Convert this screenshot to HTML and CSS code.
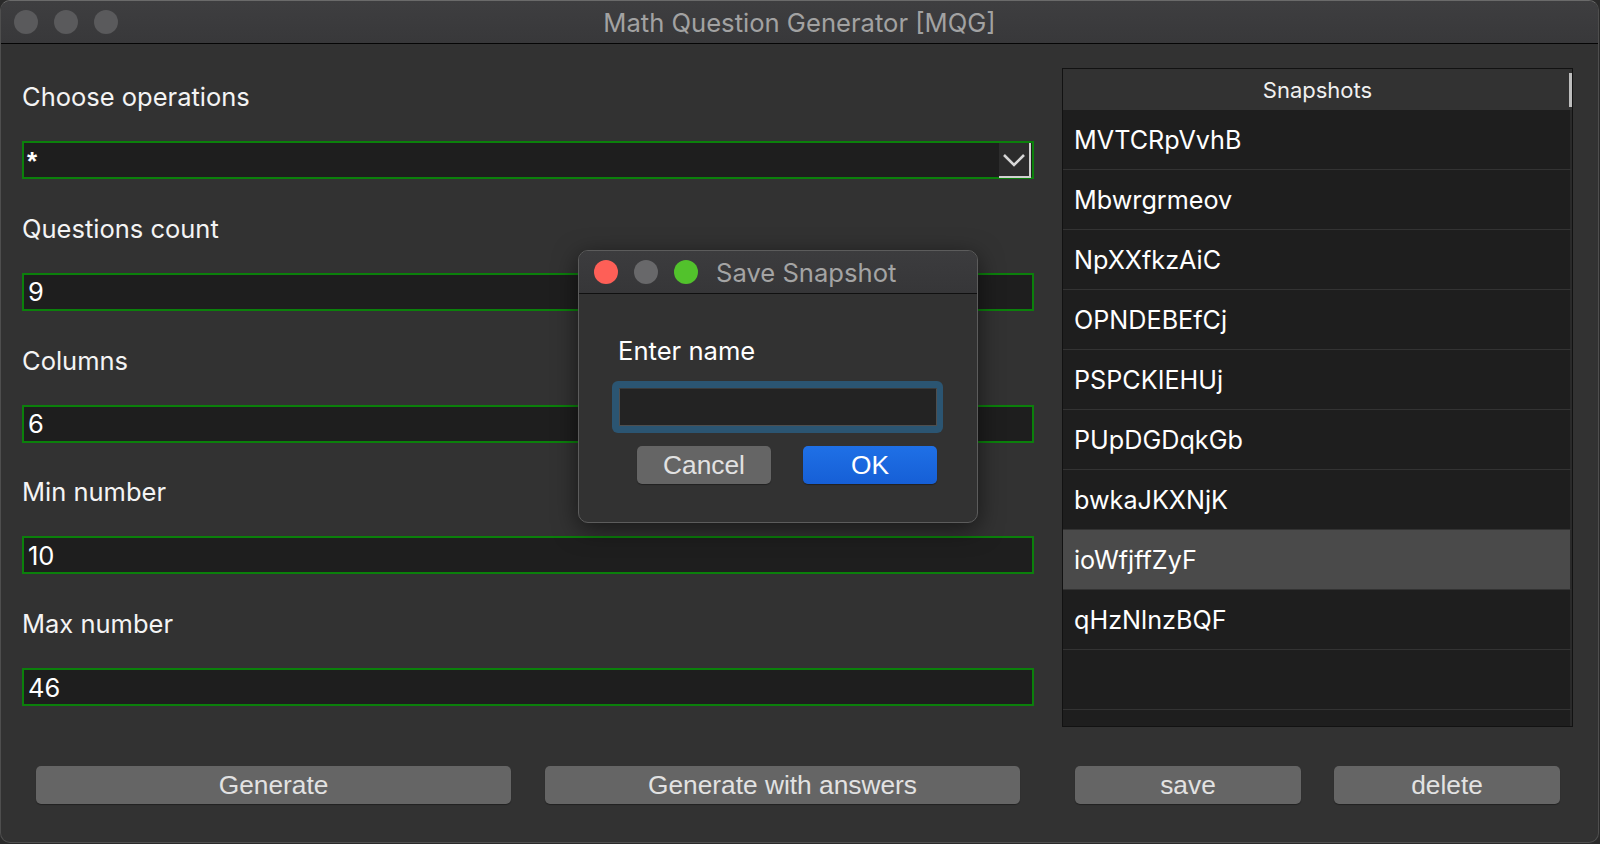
FILE: index.html
```html
<!DOCTYPE html>
<html>
<head>
<meta charset="utf-8">
<title>Math Question Generator [MQG]</title>
<link rel="stylesheet" href="styles.css">
</head>
<body>
<div class="window">
  <div class="titlebar">
    <div class="lights">
      <span class="light dim"></span>
      <span class="light dim"></span>
      <span class="light dim"></span>
    </div>
    <div class="title">Math Question Generator [MQG]</div>
  </div>
  <div class="content">
    <div class="form">
      <div class="field">
        <div class="label">Choose operations</div>
        <div class="input combo">
          <span class="value star">*</span>
          <span class="combo-btn">
            <svg width="26" height="16" viewBox="0 0 26 16"><polyline points="3,3 13,13 23,3" fill="none" stroke="#d6d6d6" stroke-width="2.6"/></svg>
          </span>
        </div>
      </div>
      <div class="field">
        <div class="label">Questions count</div>
        <div class="input"><span class="value">9</span></div>
      </div>
      <div class="field">
        <div class="label">Columns</div>
        <div class="input"><span class="value">6</span></div>
      </div>
      <div class="field">
        <div class="label">Min number</div>
        <div class="input"><span class="value">10</span></div>
      </div>
      <div class="field">
        <div class="label">Max number</div>
        <div class="input"><span class="value">46</span></div>
      </div>
    </div>
    <div class="list">
      <div class="list-head">Snapshots<span class="head-bar"></span></div>
      <div class="row">MVTCRpVvhB</div>
      <div class="row">Mbwrgrmeov</div>
      <div class="row">NpXXfkzAiC</div>
      <div class="row">OPNDEBEfCj</div>
      <div class="row">PSPCKIEHUj</div>
      <div class="row">PUpDGDqkGb</div>
      <div class="row">bwkaJKXNjK</div>
      <div class="row selected">ioWfjffZyF</div>
      <div class="row">qHzNlnzBQF</div>
      <div class="row"></div>
      <div class="row"></div>
    </div>
    <div class="btns left-btns">
      <button class="btn">Generate</button>
      <button class="btn">Generate with answers</button>
    </div>
    <div class="btns right-btns">
      <button class="btn">save</button>
      <button class="btn">delete</button>
    </div>
  </div>

  <div class="dialog">
    <div class="titlebar dlg-titlebar">
      <div class="lights">
        <span class="light red"></span>
        <span class="light gray"></span>
        <span class="light green"></span>
      </div>
      <div class="dlg-title">Save Snapshot</div>
    </div>
    <div class="dlg-body">
      <div class="dlg-label">Enter name</div>
      <div class="ring"><div class="field-inner"></div></div>
      <div class="dlg-btns">
        <button class="btn dlg-btn">Cancel</button>
        <button class="btn dlg-btn ok">OK</button>
      </div>
    </div>
  </div>
</div>
</body>
</html>
```

FILE: styles.css
```css
* { box-sizing: border-box; }
html, body { margin: 0; padding: 0; }
body {
  width: 1600px;
  height: 844px;
  background: #2a2a2a;
  font-family: "Inter", "Liberation Sans", sans-serif;
  overflow: hidden;
}
.window {
  position: relative;
  width: 1599px;
  height: 843px;
  background: #323232;
  border: 1px solid #4e4e4e;
  border-top-color: #6a6a6a;
  border-radius: 10px;
  overflow: hidden;
}
.titlebar {
  position: relative;
  height: 43px;
  background: linear-gradient(#3e3e40, #38383a);
  border-bottom: 1px solid #050505;
  display: flex;
  align-items: center;
}
.lights {
  display: flex;
  gap: 16px;
  padding-left: 13px;
}
.light {
  width: 24px;
  height: 24px;
  border-radius: 50%;
  display: block;
}
.light.dim { background: #5a5a5c; }
.light.red { background: #fe5f57; }
.light.gray { background: #68686a; }
.light.green { background: #52c22c; }
.title {
  position: absolute;
  left: 0;
  right: 0;
  top: 0;
  bottom: 0;
  display: flex;
  align-items: center;
  justify-content: center;
  color: #a2a2a2;
  font-size: 25.6px;
  padding-left: 0;
}
.content {
  display: grid;
  grid-template-columns: 1012px 511px;
  grid-template-rows: 659px 38px;
  column-gap: 28px;
  row-gap: 39px;
  padding: 24px 0 0 21px;
}
.form {
  padding-top: 14px;
  display: flex;
  flex-direction: column;
  gap: 34.75px;
}
.label {
  height: 30px;
  line-height: 30px;
  font-size: 25.5px;
  color: #f4f4f4;
  margin-bottom: 29px;
}
.input {
  position: relative;
  height: 38px;
  background: #1e1e1e;
  border: 2px solid #0b800b;
  display: flex;
  align-items: center;
  padding-left: 4px;
}
.value {
  font-family: "Inter", "Liberation Sans", sans-serif;
  font-size: 25.5px;
  color: #ffffff;
}
.star {
  font-family: "Liberation Sans", sans-serif;
  font-size: 26px;
  font-weight: bold;
  align-self: flex-start;
  margin-top: 3px;
  margin-left: -1px;
}
.combo-btn {
  position: absolute;
  right: 1px;
  top: 0px;
  width: 32px;
  height: 35px;
  background: #2c2c2c;
  border-right: 2px solid #d0d0d0;
  border-bottom: 2px solid #d0d0d0;
  display: flex;
  align-items: center;
  justify-content: center;
}
.list {
  border: 1px solid #121212;
  background: #1e1e1e;
  overflow: hidden;
  display: flex;
  flex-direction: column;
}
.list-head {
  position: relative;
  flex: none;
  height: 41px;
  background: #323232;
  color: #f0f0f0;
  font-size: 22px;
  display: flex;
  align-items: center;
  justify-content: center;
}
.head-bar {
  position: absolute;
  right: 0;
  top: 4px;
  width: 3px;
  height: 34px;
  background: #bdbdbd;
}
.row {
  flex: none;
  height: 60px;
  border-bottom: 1px solid #333333;
  border-right: 2px solid #2a2a2a;
  padding-left: 11px;
  display: flex;
  align-items: center;
  font-size: 25.2px;
  color: #ffffff;
}
.row.selected { background: #4a4a4a; }
.btns {
  display: flex;
  justify-content: space-between;
}
.left-btns { padding: 0 14px 0 14px; }
.right-btns { padding: 0 13px 0 13px; }
.btn {
  border: none;
  border-radius: 5px;
  background: #656565;
  color: #e2e2e2;
  font-family: "Liberation Sans", sans-serif;
  font-size: 26.3px;
  height: 38px;
  padding: 0;
  box-shadow: 0 1px 1px rgba(0,0,0,0.35);
}
.left-btns .btn { width: 475px; }
.right-btns .btn { width: 226px; }

.dialog {
  position: absolute;
  left: 577px;
  top: 249px;
  width: 400px;
  height: 273px;
  background: #323232;
  border: 1px solid #5c5c5c;
  border-radius: 10px;
  overflow: hidden;
  box-shadow: 0 6px 24px rgba(0,0,0,0.55);
}
.dlg-titlebar {
  height: 43px;
  border-bottom: 1px solid #101010;
  background: linear-gradient(#3c3c3e, #363638);
}
.dlg-titlebar .lights { padding-left: 15px; }
.dlg-title {
  margin-left: 18px;
  color: #a4a4a4;
  font-size: 25.6px;
}
.dlg-body {
  padding: 42px 0 0 33px;
}
.dlg-label {
  height: 30px;
  line-height: 30px;
  font-size: 25.6px;
  color: #ffffff;
  padding-left: 6px;
}
.ring {
  margin-top: 15px;
  width: 331px;
  height: 52px;
  padding: 7px 6px 7px 7px;
  background: #2b5572;
  border-radius: 6px;
}
.field-inner {
  height: 38px;
  background: #232323;
  border: 1px solid #4e4e4e;
  border-top-color: #3a3a3a;
}
.dlg-btns {
  display: flex;
  gap: 32px;
  margin-top: 13px;
  padding-left: 25px;
}
.dlg-btn { width: 134px; }
.ok {
  background: linear-gradient(#1f70e6, #165fd6);
  color: #ffffff;
}
```
